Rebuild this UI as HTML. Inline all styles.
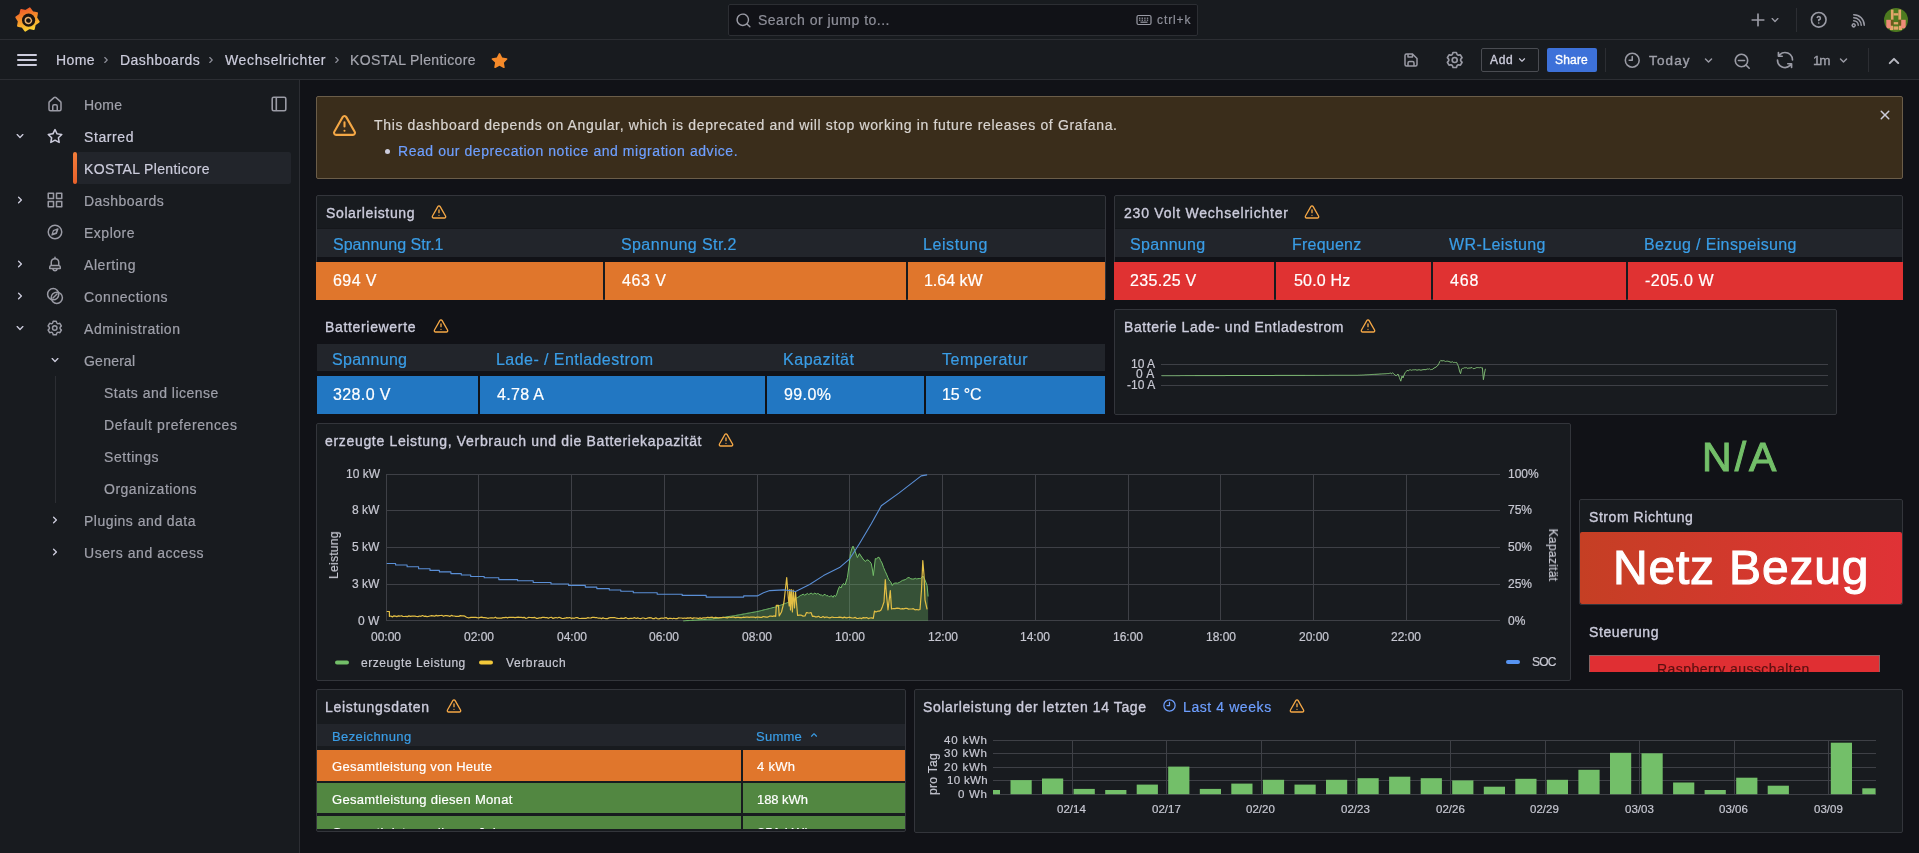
<!DOCTYPE html>
<html><head><meta charset="utf-8"><title>KOSTAL Plenticore - Grafana</title>
<style>
html,body{margin:0;padding:0;}
body{width:1919px;height:853px;overflow:hidden;position:relative;background:#111217;font-family:'Liberation Sans', sans-serif;}
svg{display:block;}
body>div{will-change:transform;-webkit-text-stroke:0.2px currentColor;}
</style></head><body>
<div style="position:absolute;left:0px;top:0px;width:1919px;height:39px;background:#181b1f;"></div>
<div style="position:absolute;left:0px;top:39px;width:1919px;height:1px;background:#2c2e33;"></div>
<div style="position:absolute;left:0px;top:40px;width:1919px;height:39px;background:#181b1f;"></div>
<div style="position:absolute;left:0px;top:79px;width:1919px;height:1px;background:#2c2e33;"></div>
<div style="position:absolute;left:0px;top:80px;width:299px;height:773px;background:#181b1f;"></div>
<div style="position:absolute;left:299px;top:80px;width:1px;height:773px;background:#2c2e33;"></div>
<div style="position:absolute;left:728px;top:4px;width:470px;height:32px;background:#111217;box-sizing:border-box;border:1px solid #2c2e33;border-radius:2px;"></div>
<div style="position:absolute;left:757.50px;top:13.00px;font-size:14px;line-height:14px;font-weight:400;color:#8e8f99;white-space:nowrap;letter-spacing:0.491px;">Search or jump to...</div>
<div style="position:absolute;left:1156.60px;top:14.00px;font-size:12px;line-height:12px;font-weight:400;color:#8e8f99;white-space:nowrap;letter-spacing:0.897px;">ctrl+k</div>
<div style="position:absolute;left:55.50px;top:53.00px;font-size:14px;line-height:14px;font-weight:400;color:#ccccdc;white-space:nowrap;letter-spacing:0.380px;">Home</div>
<div style="position:absolute;left:119.50px;top:53.00px;font-size:14px;line-height:14px;font-weight:400;color:#ccccdc;white-space:nowrap;letter-spacing:0.478px;">Dashboards</div>
<div style="position:absolute;left:224.50px;top:53.00px;font-size:14px;line-height:14px;font-weight:400;color:#ccccdc;white-space:nowrap;letter-spacing:0.629px;">Wechselrichter</div>
<div style="position:absolute;left:350.00px;top:53.00px;font-size:14px;line-height:14px;font-weight:400;color:#a4a5ae;white-space:nowrap;letter-spacing:0.354px;">KOSTAL Plenticore</div>
<div style="position:absolute;left:1481px;top:48px;width:58px;height:24px;background:transparent;box-sizing:border-box;border:1px solid #4a4c52;border-radius:2px;"></div>
<div style="position:absolute;left:1489.50px;top:54.00px;font-size:12px;line-height:12px;font-weight:400;color:#ccccdc;white-space:nowrap;letter-spacing:0.670px;-webkit-text-stroke:0.35px currentColor;">Add</div>
<div style="position:absolute;left:1547px;top:48px;width:50px;height:24px;background:#3d71d9;border-radius:2px;"></div>
<div style="position:absolute;left:1555.30px;top:54.00px;font-size:12px;line-height:12px;font-weight:400;color:#ffffff;white-space:nowrap;letter-spacing:0.192px;-webkit-text-stroke:0.35px currentColor;">Share</div>
<div style="position:absolute;left:1605px;top:48px;width:1px;height:24px;background:#2c2e33;"></div>
<div style="position:absolute;left:1649.40px;top:54.00px;font-size:13.5px;line-height:13.5px;font-weight:400;color:#9fa0aa;white-space:nowrap;letter-spacing:1.142px;-webkit-text-stroke:0.35px currentColor;">Today</div>
<div style="position:absolute;left:1812.50px;top:54.00px;font-size:13.5px;line-height:13.5px;font-weight:400;color:#9fa0aa;white-space:nowrap;letter-spacing:-1.266px;-webkit-text-stroke:0.35px currentColor;">1m</div>
<div style="position:absolute;left:1868px;top:48px;width:1px;height:24px;background:#2c2e33;"></div>
<div style="position:absolute;left:1796px;top:8px;width:1px;height:24px;background:#2c2e33;"></div>
<div style="position:absolute;left:77px;top:152px;width:214px;height:32px;background:#22252b;border-radius:2px;"></div>
<div style="position:absolute;left:73px;top:152px;width:4px;height:32px;background:#f05a28;border-radius:2px;background:linear-gradient(180deg,#f27d3a,#e8612b);"></div>
<div style="position:absolute;left:83.50px;top:98.00px;font-size:14px;line-height:14px;font-weight:400;color:#9fa0aa;white-space:nowrap;letter-spacing:0.214px;">Home</div>
<div style="position:absolute;left:83.50px;top:130.00px;font-size:14px;line-height:14px;font-weight:400;color:#ccccdc;white-space:nowrap;letter-spacing:0.596px;">Starred</div>
<div style="position:absolute;left:83.50px;top:162.00px;font-size:14px;line-height:14px;font-weight:400;color:#ccccdc;white-space:nowrap;letter-spacing:0.354px;">KOSTAL Plenticore</div>
<div style="position:absolute;left:83.50px;top:194.00px;font-size:14px;line-height:14px;font-weight:400;color:#9fa0aa;white-space:nowrap;letter-spacing:0.478px;">Dashboards</div>
<div style="position:absolute;left:83.50px;top:226.00px;font-size:14px;line-height:14px;font-weight:400;color:#9fa0aa;white-space:nowrap;letter-spacing:0.505px;">Explore</div>
<div style="position:absolute;left:83.50px;top:258.00px;font-size:14px;line-height:14px;font-weight:400;color:#9fa0aa;white-space:nowrap;letter-spacing:0.576px;">Alerting</div>
<div style="position:absolute;left:83.50px;top:290.00px;font-size:14px;line-height:14px;font-weight:400;color:#9fa0aa;white-space:nowrap;letter-spacing:0.567px;">Connections</div>
<div style="position:absolute;left:83.50px;top:322.00px;font-size:14px;line-height:14px;font-weight:400;color:#9fa0aa;white-space:nowrap;letter-spacing:0.561px;">Administration</div>
<div style="position:absolute;left:83.50px;top:354.00px;font-size:14px;line-height:14px;font-weight:400;color:#9fa0aa;white-space:nowrap;letter-spacing:0.231px;">General</div>
<div style="position:absolute;left:103.50px;top:386.00px;font-size:14px;line-height:14px;font-weight:400;color:#9fa0aa;white-space:nowrap;letter-spacing:0.480px;">Stats and license</div>
<div style="position:absolute;left:103.50px;top:418.00px;font-size:14px;line-height:14px;font-weight:400;color:#9fa0aa;white-space:nowrap;letter-spacing:0.601px;">Default preferences</div>
<div style="position:absolute;left:103.50px;top:450.00px;font-size:14px;line-height:14px;font-weight:400;color:#9fa0aa;white-space:nowrap;letter-spacing:0.558px;">Settings</div>
<div style="position:absolute;left:103.50px;top:482.00px;font-size:14px;line-height:14px;font-weight:400;color:#9fa0aa;white-space:nowrap;letter-spacing:0.509px;">Organizations</div>
<div style="position:absolute;left:55px;top:376px;width:1px;height:127px;background:#2c2e33;"></div>
<div style="position:absolute;left:83.50px;top:514.00px;font-size:14px;line-height:14px;font-weight:400;color:#9fa0aa;white-space:nowrap;letter-spacing:0.479px;">Plugins and data</div>
<div style="position:absolute;left:83.50px;top:546.00px;font-size:14px;line-height:14px;font-weight:400;color:#9fa0aa;white-space:nowrap;letter-spacing:0.548px;">Users and access</div>
<div style="position:absolute;left:316px;top:96px;width:1587px;height:83px;background:#3a2d1b;box-sizing:border-box;border:1px solid #6b5d49;border-radius:2px;"></div>
<div style="position:absolute;left:373.80px;top:118.00px;font-size:14px;line-height:14px;font-weight:400;color:#d8d4d0;white-space:nowrap;letter-spacing:0.651px;">This dashboard depends on Angular, which is deprecated and will stop working in future releases of Grafana.</div>
<div style="position:absolute;left:385px;top:149px;width:5px;height:5px;border-radius:50%;background:#ccccdc"></div>
<div style="position:absolute;left:397.70px;top:144.00px;font-size:14px;line-height:14px;font-weight:400;color:#6e9fff;white-space:nowrap;letter-spacing:0.557px;">Read our deprecation notice and migration advice.</div>
<div style="position:absolute;left:316px;top:195px;width:790px;height:105px;background:#181b1f;box-sizing:border-box;border:1px solid #33353b;border-radius:2px;"></div>
<div style="position:absolute;left:317px;top:228px;width:788px;height:1px;background:#15171b;"></div>
<div style="position:absolute;left:317px;top:229px;width:788px;height:28px;background:#22252b;"></div>
<div style="position:absolute;left:317px;top:257px;width:788px;height:5px;background:#111217;"></div>
<div style="position:absolute;left:316px;top:262px;width:287px;height:38px;background:#e0762c;"></div>
<div style="position:absolute;left:605px;top:262px;width:301px;height:38px;background:#e0762c;"></div>
<div style="position:absolute;left:908px;top:262px;width:197px;height:38px;background:#e0762c;"></div>
<div style="position:absolute;left:325.50px;top:206.00px;font-size:14px;line-height:14px;font-weight:400;color:#ccccdc;white-space:nowrap;letter-spacing:0.630px;-webkit-text-stroke:0.35px currentColor;">Solarleistung</div>
<div style="position:absolute;left:332.50px;top:237.00px;font-size:16px;line-height:16px;font-weight:400;color:#3a9de6;white-space:nowrap;letter-spacing:0.014px;">Spannung Str.1</div>
<div style="position:absolute;left:621.00px;top:237.00px;font-size:16px;line-height:16px;font-weight:400;color:#3a9de6;white-space:nowrap;letter-spacing:0.399px;">Spannung Str.2</div>
<div style="position:absolute;left:923.00px;top:237.00px;font-size:16px;line-height:16px;font-weight:400;color:#3a9de6;white-space:nowrap;letter-spacing:0.571px;">Leistung</div>
<div style="position:absolute;left:332.50px;top:273.00px;font-size:16px;line-height:16px;font-weight:400;color:#ffffff;white-space:nowrap;letter-spacing:0.422px;">694 V</div>
<div style="position:absolute;left:622.00px;top:273.00px;font-size:16px;line-height:16px;font-weight:400;color:#ffffff;white-space:nowrap;letter-spacing:0.547px;">463 V</div>
<div style="position:absolute;left:924.00px;top:273.00px;font-size:16px;line-height:16px;font-weight:400;color:#ffffff;white-space:nowrap;letter-spacing:-0.031px;">1.64 kW</div>
<div style="position:absolute;left:1114px;top:195px;width:789px;height:105px;background:#181b1f;box-sizing:border-box;border:1px solid #33353b;border-radius:2px;"></div>
<div style="position:absolute;left:1115px;top:228px;width:787px;height:1px;background:#15171b;"></div>
<div style="position:absolute;left:1115px;top:229px;width:787px;height:28px;background:#22252b;"></div>
<div style="position:absolute;left:1115px;top:257px;width:787px;height:5px;background:#111217;"></div>
<div style="position:absolute;left:1114px;top:262px;width:160px;height:38px;background:#e03232;"></div>
<div style="position:absolute;left:1276px;top:262px;width:155px;height:38px;background:#e03232;"></div>
<div style="position:absolute;left:1433px;top:262px;width:193px;height:38px;background:#e03232;"></div>
<div style="position:absolute;left:1628px;top:262px;width:275px;height:38px;background:#e03232;"></div>
<div style="position:absolute;left:1123.50px;top:206.00px;font-size:14px;line-height:14px;font-weight:400;color:#ccccdc;white-space:nowrap;letter-spacing:0.781px;-webkit-text-stroke:0.35px currentColor;">230 Volt Wechselrichter</div>
<div style="position:absolute;left:1130.20px;top:237.00px;font-size:16px;line-height:16px;font-weight:400;color:#3a9de6;white-space:nowrap;letter-spacing:0.319px;">Spannung</div>
<div style="position:absolute;left:1292.30px;top:237.00px;font-size:16px;line-height:16px;font-weight:400;color:#3a9de6;white-space:nowrap;letter-spacing:0.229px;">Frequenz</div>
<div style="position:absolute;left:1448.70px;top:237.00px;font-size:16px;line-height:16px;font-weight:400;color:#3a9de6;white-space:nowrap;letter-spacing:0.402px;">WR-Leistung</div>
<div style="position:absolute;left:1644.00px;top:237.00px;font-size:16px;line-height:16px;font-weight:400;color:#3a9de6;white-space:nowrap;letter-spacing:0.368px;">Bezug / Einspeisung</div>
<div style="position:absolute;left:1130.20px;top:273.00px;font-size:16px;line-height:16px;font-weight:400;color:#ffffff;white-space:nowrap;letter-spacing:0.320px;">235.25 V</div>
<div style="position:absolute;left:1293.80px;top:273.00px;font-size:16px;line-height:16px;font-weight:400;color:#ffffff;white-space:nowrap;letter-spacing:0.177px;">50.0 Hz</div>
<div style="position:absolute;left:1450.00px;top:273.00px;font-size:16px;line-height:16px;font-weight:400;color:#ffffff;white-space:nowrap;letter-spacing:0.898px;">468</div>
<div style="position:absolute;left:1645.00px;top:273.00px;font-size:16px;line-height:16px;font-weight:400;color:#ffffff;white-space:nowrap;letter-spacing:0.511px;">-205.0 W</div>
<div style="position:absolute;left:317px;top:344px;width:788px;height:27px;background:#22252b;"></div>
<div style="position:absolute;left:317px;top:376px;width:161px;height:38px;background:#2277c2;"></div>
<div style="position:absolute;left:480px;top:376px;width:285px;height:38px;background:#2277c2;"></div>
<div style="position:absolute;left:767px;top:376px;width:157px;height:38px;background:#2277c2;"></div>
<div style="position:absolute;left:926px;top:376px;width:179px;height:38px;background:#2277c2;"></div>
<div style="position:absolute;left:325.40px;top:320.00px;font-size:14px;line-height:14px;font-weight:400;color:#ccccdc;white-space:nowrap;letter-spacing:0.668px;-webkit-text-stroke:0.35px currentColor;">Batteriewerte</div>
<div style="position:absolute;left:332.30px;top:352.00px;font-size:16px;line-height:16px;font-weight:400;color:#3a9de6;white-space:nowrap;letter-spacing:0.290px;">Spannung</div>
<div style="position:absolute;left:496.00px;top:352.00px;font-size:16px;line-height:16px;font-weight:400;color:#3a9de6;white-space:nowrap;letter-spacing:0.446px;">Lade- / Entladestrom</div>
<div style="position:absolute;left:783.00px;top:352.00px;font-size:16px;line-height:16px;font-weight:400;color:#3a9de6;white-space:nowrap;letter-spacing:0.535px;">Kapazität</div>
<div style="position:absolute;left:942.00px;top:352.00px;font-size:16px;line-height:16px;font-weight:400;color:#3a9de6;white-space:nowrap;letter-spacing:0.509px;">Temperatur</div>
<div style="position:absolute;left:332.80px;top:387.00px;font-size:16px;line-height:16px;font-weight:400;color:#ffffff;white-space:nowrap;letter-spacing:0.391px;">328.0 V</div>
<div style="position:absolute;left:497.00px;top:387.00px;font-size:16px;line-height:16px;font-weight:400;color:#ffffff;white-space:nowrap;letter-spacing:0.325px;">4.78 A</div>
<div style="position:absolute;left:784.00px;top:387.00px;font-size:16px;line-height:16px;font-weight:400;color:#ffffff;white-space:nowrap;letter-spacing:0.406px;">99.0%</div>
<div style="position:absolute;left:942.00px;top:387.00px;font-size:16px;line-height:16px;font-weight:400;color:#ffffff;white-space:nowrap;letter-spacing:-0.176px;">15 °C</div>
<div style="position:absolute;left:1114px;top:309px;width:723px;height:106px;background:#181b1f;box-sizing:border-box;border:1px solid #33353b;border-radius:2px;"></div>
<div style="position:absolute;left:1123.50px;top:320.00px;font-size:14px;line-height:14px;font-weight:400;color:#ccccdc;white-space:nowrap;letter-spacing:0.597px;-webkit-text-stroke:0.35px currentColor;">Batterie Lade- und Entladestrom</div>
<div style="position:absolute;left:316px;top:423px;width:1255px;height:258px;background:#181b1f;box-sizing:border-box;border:1px solid #33353b;border-radius:2px;"></div>
<div style="position:absolute;left:325.00px;top:434.00px;font-size:14px;line-height:14px;font-weight:400;color:#ccccdc;white-space:nowrap;letter-spacing:0.672px;-webkit-text-stroke:0.35px currentColor;">erzeugte Leistung, Verbrauch und die Batteriekapazität</div>
<div style="position:absolute;left:1702.00px;top:437.00px;font-size:41px;line-height:41px;font-weight:400;color:#73bf69;white-space:nowrap;letter-spacing:3.020px;-webkit-text-stroke:1px #73bf69;">N/A</div>
<div style="position:absolute;left:1579px;top:499px;width:324px;height:106px;background:#181b1f;box-sizing:border-box;border:1px solid #33353b;border-radius:2px;"></div>
<div style="position:absolute;left:1580px;top:532px;width:322px;height:72px;background:linear-gradient(90deg,#c53f24 0%,#e03236 100%);border-radius:2px;"></div>
<div style="position:absolute;left:1588.50px;top:510.00px;font-size:14px;line-height:14px;font-weight:400;color:#ccccdc;white-space:nowrap;letter-spacing:0.563px;-webkit-text-stroke:0.35px currentColor;">Strom Richtung</div>
<div style="position:absolute;left:1613.20px;top:544.00px;font-size:48px;line-height:48px;font-weight:400;color:#ffffff;white-space:nowrap;letter-spacing:0.807px;-webkit-text-stroke:1.1px #ffffff;">Netz Bezug</div>
<div style="position:absolute;left:1588.50px;top:625.00px;font-size:14px;line-height:14px;font-weight:400;color:#ccccdc;white-space:nowrap;letter-spacing:0.611px;-webkit-text-stroke:0.35px currentColor;">Steuerung</div>
<div style="position:absolute;left:1589px;top:655px;width:291px;height:17px;overflow:hidden;background:#e02f33;box-sizing:border-box;border:1px solid #8a6464;border-bottom:none;"><div style="position:absolute;left:67px;top:6px;font-size:14px;line-height:14px;color:#5a1010;white-space:nowrap;letter-spacing:0.45px">Raspberry ausschalten</div></div>
<div style="position:absolute;left:316px;top:689px;width:590px;height:143px;background:#181b1f;box-sizing:border-box;border:1px solid #33353b;border-radius:2px;"></div>
<div style="position:absolute;left:317px;top:724px;width:588px;height:22px;background:#22252b;"></div>
<div style="position:absolute;left:317px;top:750px;width:424px;height:31px;background:#e0762c;"></div>
<div style="position:absolute;left:743px;top:750px;width:162px;height:31px;background:#e0762c;"></div>
<div style="position:absolute;left:317px;top:783px;width:424px;height:30px;background:#528741;"></div>
<div style="position:absolute;left:743px;top:783px;width:162px;height:30px;background:#528741;"></div>
<div style="position:absolute;left:317px;top:816px;width:424px;height:13px;background:#528741;"></div>
<div style="position:absolute;left:743px;top:816px;width:162px;height:13px;background:#528741;"></div>
<div style="position:absolute;left:325.20px;top:700.00px;font-size:14px;line-height:14px;font-weight:400;color:#ccccdc;white-space:nowrap;letter-spacing:0.695px;-webkit-text-stroke:0.35px currentColor;">Leistungsdaten</div>
<div style="position:absolute;left:332.30px;top:730.00px;font-size:13px;line-height:13px;font-weight:400;color:#3a9de6;white-space:nowrap;letter-spacing:0.403px;">Bezeichnung</div>
<div style="position:absolute;left:755.60px;top:730.00px;font-size:13px;line-height:13px;font-weight:400;color:#3a9de6;white-space:nowrap;letter-spacing:0.251px;">Summe</div>
<div style="position:absolute;left:332.30px;top:760.00px;font-size:13px;line-height:13px;font-weight:400;color:#ffffff;white-space:nowrap;letter-spacing:0.296px;">Gesamtleistung von Heute</div>
<div style="position:absolute;left:757.20px;top:760.00px;font-size:13px;line-height:13px;font-weight:400;color:#ffffff;white-space:nowrap;letter-spacing:0.289px;">4 kWh</div>
<div style="position:absolute;left:332.30px;top:793.00px;font-size:13px;line-height:13px;font-weight:400;color:#ffffff;white-space:nowrap;letter-spacing:0.320px;">Gesamtleistung diesen Monat</div>
<div style="position:absolute;left:757.20px;top:793.00px;font-size:13px;line-height:13px;font-weight:400;color:#ffffff;white-space:nowrap;letter-spacing:-0.052px;">188 kWh</div>
<div style="position:absolute;left:317px;top:816px;width:588px;height:13px;overflow:hidden;"><div style="position:absolute;left:15px;top:10px;font-size:13px;line-height:13px;color:#fff;white-space:nowrap;letter-spacing:0.5px">Gesamtleistung dieses Jahr</div><div style="position:absolute;left:440.5px;top:10px;font-size:13px;line-height:13px;color:#fff;white-space:nowrap;letter-spacing:0.5px">851 kWh</div></div>
<div style="position:absolute;left:914px;top:689px;width:989px;height:144px;background:#181b1f;box-sizing:border-box;border:1px solid #33353b;border-radius:2px;"></div>
<div style="position:absolute;left:922.80px;top:700.00px;font-size:14px;line-height:14px;font-weight:400;color:#ccccdc;white-space:nowrap;letter-spacing:0.604px;-webkit-text-stroke:0.35px currentColor;">Solarleistung der letzten 14 Tage</div>
<div style="position:absolute;left:1182.50px;top:700.00px;font-size:14px;line-height:14px;font-weight:400;color:#6e9fff;white-space:nowrap;letter-spacing:0.589px;">Last 4 weeks</div>
<svg style="position:absolute;left:0;top:0" width="1919" height="853" viewBox="0 0 1919 853"><line x1="386" y1="474.5" x2="1500" y2="474.5" stroke="#3e4046" stroke-width="1"/><line x1="386" y1="510.5" x2="1500" y2="510.5" stroke="#3e4046" stroke-width="1"/><line x1="386" y1="547.5" x2="1500" y2="547.5" stroke="#3e4046" stroke-width="1"/><line x1="386" y1="584.5" x2="1500" y2="584.5" stroke="#3e4046" stroke-width="1"/><line x1="386" y1="620.5" x2="1500" y2="620.5" stroke="#3e4046" stroke-width="1"/><line x1="386.5" y1="474" x2="386.5" y2="621" stroke="#3e4046" stroke-width="1"/><line x1="478.5" y1="474" x2="478.5" y2="621" stroke="#3e4046" stroke-width="1"/><line x1="571.5" y1="474" x2="571.5" y2="621" stroke="#3e4046" stroke-width="1"/><line x1="664.5" y1="474" x2="664.5" y2="621" stroke="#3e4046" stroke-width="1"/><line x1="757.5" y1="474" x2="757.5" y2="621" stroke="#3e4046" stroke-width="1"/><line x1="849.5" y1="474" x2="849.5" y2="621" stroke="#3e4046" stroke-width="1"/><line x1="942.5" y1="474" x2="942.5" y2="621" stroke="#3e4046" stroke-width="1"/><line x1="1035.5" y1="474" x2="1035.5" y2="621" stroke="#3e4046" stroke-width="1"/><line x1="1128.5" y1="474" x2="1128.5" y2="621" stroke="#3e4046" stroke-width="1"/><line x1="1220.5" y1="474" x2="1220.5" y2="621" stroke="#3e4046" stroke-width="1"/><line x1="1313.5" y1="474" x2="1313.5" y2="621" stroke="#3e4046" stroke-width="1"/><line x1="1406.5" y1="474" x2="1406.5" y2="621" stroke="#3e4046" stroke-width="1"/><polygon points="683.3,620.9 684.5,620.8 685.7,620.7 686.9,620.6 688.1,620.6 689.3,620.5 690.5,620.4 691.8,620.3 693.0,620.2 694.2,620.1 695.4,620.1 696.6,620.0 697.8,619.9 699.0,619.8 700.2,619.7 701.4,619.6 702.6,619.6 703.8,619.5 705.0,619.4 706.3,619.3 707.5,619.2 708.7,619.1 709.9,619.1 711.1,619.0 712.3,618.9 713.5,618.8 714.7,618.6 716.0,618.4 717.2,618.3 718.4,618.1 719.6,617.9 720.9,617.7 722.1,617.5 723.3,617.3 724.6,617.2 725.8,617.0 727.0,616.8 728.3,616.6 729.5,616.4 730.7,616.2 731.9,616.1 733.2,615.9 734.4,615.7 735.6,615.5 736.9,615.2 738.1,615.0 739.3,614.8 740.6,614.6 741.8,614.3 743.0,614.1 744.3,613.9 745.5,613.7 746.7,613.4 747.9,613.2 749.2,613.0 750.4,612.8 751.6,612.5 752.9,612.3 754.1,612.1 755.3,611.9 756.6,611.6 757.8,611.4 759.1,611.1 760.4,610.8 761.6,610.5 762.9,610.1 764.2,609.8 765.5,609.5 766.8,609.2 768.0,608.9 769.3,608.6 770.6,608.3 771.9,607.9 773.1,607.6 774.4,607.3 775.7,607.0 776.9,606.5 778.1,606.1 779.3,605.6 780.5,605.2 781.7,604.8 782.9,604.3 784.1,603.9 785.3,603.4 786.5,603.0 787.7,602.5 788.9,601.9 790.2,601.2 791.4,600.6 792.7,600.0 793.9,599.4 795.1,598.8 796.4,598.1 797.6,597.5 798.9,596.7 800.3,595.5 801.6,595.1 803.1,594.1 804.5,595.1 806.0,594.5 807.3,593.4 808.5,594.4 809.8,593.9 811.1,593.0 812.3,594.0 813.6,593.9 814.9,593.0 816.2,594.2 817.4,593.5 818.7,593.8 820.0,595.0 821.3,594.9 822.7,596.0 824.0,594.4 825.3,594.7 826.7,595.8 828.0,595.6 829.2,596.8 830.5,596.1 831.8,595.8 833.0,597.3 834.2,595.3 835.5,596.5 836.8,594.1 838.0,590.0 839.5,586.5 841.0,588.0 842.2,585.2 843.5,583.5 845.0,585.0 847.4,577.6 849.0,566.0 850.4,553.6 851.7,549.0 853.0,546.1 855.0,551.0 857.4,557.6 859.4,553.6 861.0,556.0 863.0,559.0 865.4,561.6 866.7,559.9 868.0,560.0 869.6,561.3 871.3,563.6 872.5,570.0 873.3,575.6 874.5,566.0 875.3,558.6 876.6,559.0 878.0,557.2 879.3,557.6 880.6,560.5 882.0,563.0 883.6,567.6 885.3,571.6 886.5,574.1 887.8,577.3 889.0,580.0 890.6,581.7 892.3,585.5 893.5,583.6 894.8,583.1 896.0,583.0 897.6,583.2 899.2,582.5 900.8,581.5 902.4,580.4 904.0,580.0 905.3,579.6 906.6,578.7 907.9,577.7 909.2,577.6 910.8,578.8 912.4,579.0 914.0,579.0 915.3,578.3 916.6,578.9 917.9,578.7 919.2,578.5 920.5,578.6 921.7,577.4 923.0,576.0 925.0,580.0 927.1,585.5 928.1,596.5 928.1,620.9" fill="#73bf69" fill-opacity="0.33" stroke="none"/><polyline points="683.3,620.9 684.5,620.8 685.7,620.7 686.9,620.6 688.1,620.6 689.3,620.5 690.5,620.4 691.8,620.3 693.0,620.2 694.2,620.1 695.4,620.1 696.6,620.0 697.8,619.9 699.0,619.8 700.2,619.7 701.4,619.6 702.6,619.6 703.8,619.5 705.0,619.4 706.3,619.3 707.5,619.2 708.7,619.1 709.9,619.1 711.1,619.0 712.3,618.9 713.5,618.8 714.7,618.6 716.0,618.4 717.2,618.3 718.4,618.1 719.6,617.9 720.9,617.7 722.1,617.5 723.3,617.3 724.6,617.2 725.8,617.0 727.0,616.8 728.3,616.6 729.5,616.4 730.7,616.2 731.9,616.1 733.2,615.9 734.4,615.7 735.6,615.5 736.9,615.2 738.1,615.0 739.3,614.8 740.6,614.6 741.8,614.3 743.0,614.1 744.3,613.9 745.5,613.7 746.7,613.4 747.9,613.2 749.2,613.0 750.4,612.8 751.6,612.5 752.9,612.3 754.1,612.1 755.3,611.9 756.6,611.6 757.8,611.4 759.1,611.1 760.4,610.8 761.6,610.5 762.9,610.1 764.2,609.8 765.5,609.5 766.8,609.2 768.0,608.9 769.3,608.6 770.6,608.3 771.9,607.9 773.1,607.6 774.4,607.3 775.7,607.0 776.9,606.5 778.1,606.1 779.3,605.6 780.5,605.2 781.7,604.8 782.9,604.3 784.1,603.9 785.3,603.4 786.5,603.0 787.7,602.5 788.9,601.9 790.2,601.2 791.4,600.6 792.7,600.0 793.9,599.4 795.1,598.8 796.4,598.1 797.6,597.5 798.9,596.7 800.3,595.5 801.6,595.1 803.1,594.1 804.5,595.1 806.0,594.5 807.3,593.4 808.5,594.4 809.8,593.9 811.1,593.0 812.3,594.0 813.6,593.9 814.9,593.0 816.2,594.2 817.4,593.5 818.7,593.8 820.0,595.0 821.3,594.9 822.7,596.0 824.0,594.4 825.3,594.7 826.7,595.8 828.0,595.6 829.2,596.8 830.5,596.1 831.8,595.8 833.0,597.3 834.2,595.3 835.5,596.5 836.8,594.1 838.0,590.0 839.5,586.5 841.0,588.0 842.2,585.2 843.5,583.5 845.0,585.0 847.4,577.6 849.0,566.0 850.4,553.6 851.7,549.0 853.0,546.1 855.0,551.0 857.4,557.6 859.4,553.6 861.0,556.0 863.0,559.0 865.4,561.6 866.7,559.9 868.0,560.0 869.6,561.3 871.3,563.6 872.5,570.0 873.3,575.6 874.5,566.0 875.3,558.6 876.6,559.0 878.0,557.2 879.3,557.6 880.6,560.5 882.0,563.0 883.6,567.6 885.3,571.6 886.5,574.1 887.8,577.3 889.0,580.0 890.6,581.7 892.3,585.5 893.5,583.6 894.8,583.1 896.0,583.0 897.6,583.2 899.2,582.5 900.8,581.5 902.4,580.4 904.0,580.0 905.3,579.6 906.6,578.7 907.9,577.7 909.2,577.6 910.8,578.8 912.4,579.0 914.0,579.0 915.3,578.3 916.6,578.9 917.9,578.7 919.2,578.5 920.5,578.6 921.7,577.4 923.0,576.0 925.0,580.0 927.1,585.5 928.1,596.5" fill="none" stroke="#73bf69" stroke-width="1" stroke-linejoin="round"/><polyline points="386.7,611.5 389.4,611.5 389.4,616.3 390.9,616.0 392.4,616.9 393.9,615.8 395.4,616.2 396.9,616.6 398.4,615.8 399.9,616.2 401.4,615.7 402.9,616.4 404.4,616.5 405.9,616.3 407.4,616.6 408.9,615.9 410.5,616.4 412.0,616.2 413.5,616.2 415.0,616.1 416.5,616.5 418.0,616.6 419.5,616.0 421.0,616.3 422.5,615.5 424.0,616.3 425.5,616.2 427.0,616.6 428.5,616.4 430.0,616.0 431.5,615.7 433.0,615.9 434.6,616.2 436.1,615.4 437.6,615.9 439.1,615.6 440.6,615.5 442.1,615.4 443.7,616.3 445.2,615.5 446.7,615.6 448.2,615.8 449.7,616.4 451.3,615.4 452.8,615.9 454.3,616.0 455.8,616.4 457.3,616.3 458.8,616.4 460.4,615.6 461.9,615.8 463.4,615.9 464.9,616.2 466.5,617.3 468.1,617.8 469.6,617.7 471.1,617.3 472.6,617.3 474.1,617.4 475.7,617.4 477.2,617.7 478.7,617.8 480.2,617.4 481.7,617.1 483.2,617.6 484.8,617.6 486.3,617.8 487.8,618.3 489.3,618.0 490.8,617.8 492.3,617.9 493.9,618.0 495.4,617.2 496.9,618.2 498.4,618.1 499.9,618.2 501.4,618.1 503.0,617.6 504.5,617.7 506.0,617.3 507.5,617.9 509.0,617.3 510.5,617.3 512.1,617.4 513.6,617.4 515.1,617.6 516.6,617.3 518.1,617.2 519.6,617.4 521.2,617.3 522.7,617.7 524.2,617.3 525.7,618.3 527.2,618.0 528.7,617.4 530.3,617.5 531.8,617.7 533.3,617.7 534.8,617.4 536.3,618.3 537.8,618.4 539.3,617.8 540.9,617.8 542.4,617.4 543.9,617.4 545.4,617.7 546.9,617.6 548.4,618.3 550.0,617.5 551.5,617.3 553.0,618.4 554.5,617.9 556.0,617.5 557.5,618.0 559.1,617.3 560.6,617.9 562.1,618.5 563.6,618.4 565.1,618.2 566.6,617.6 568.2,617.8 569.7,617.5 571.2,618.3 572.7,618.0 574.2,618.3 575.7,617.7 577.3,617.6 578.8,618.3 580.3,618.5 581.8,618.4 583.3,618.3 584.8,618.3 586.4,618.3 587.9,617.6 589.4,618.0 590.9,617.8 592.4,617.4 593.9,617.4 595.5,617.7 597.0,617.7 598.5,618.2 600.0,618.0 601.5,618.6 603.0,617.9 604.5,618.5 606.0,618.6 607.5,618.6 609.1,617.9 610.6,617.7 612.1,617.7 613.6,617.7 615.1,617.7 616.6,618.2 618.1,618.5 619.6,618.5 621.1,618.1 622.6,618.3 624.1,618.4 625.7,617.6 627.2,618.3 628.7,618.6 630.2,618.4 631.7,618.4 633.2,618.1 634.7,617.7 636.2,618.5 637.7,617.9 639.2,618.5 640.7,618.7 642.3,618.0 643.8,618.0 645.3,618.7 646.8,618.4 648.3,617.8 649.8,617.7 651.3,617.8 652.8,618.7 654.3,618.6 655.8,617.8 657.3,618.6 658.9,618.8 660.4,618.4 661.9,618.0 663.4,618.3 664.9,617.8 666.4,617.7 667.9,618.8 669.4,618.4 670.9,618.3 672.4,618.8 673.9,618.2 675.5,618.7 677.0,618.7 678.5,617.9 680.0,618.0 681.5,618.0 683.0,618.3 684.5,618.0 686.1,618.3 687.6,617.9 689.2,618.1 690.7,617.7 692.2,618.6 693.8,617.9 695.3,618.0 696.9,618.1 698.4,618.5 700.0,617.9 701.5,618.5 703.0,617.9 704.6,617.9 706.1,617.9 707.7,617.3 709.2,617.7 710.8,617.4 712.3,617.2 713.8,618.1 715.4,617.3 716.9,617.6 718.5,617.9 720.0,617.6 721.5,617.6 723.1,617.3 724.6,617.5 726.2,617.6 727.7,617.8 729.2,617.0 730.8,617.5 732.3,617.1 733.9,617.1 735.4,617.7 737.0,617.3 738.5,617.4 740.0,617.6 741.6,617.7 743.1,617.2 744.7,617.3 746.2,617.2 747.8,617.2 749.3,617.4 750.8,617.0 752.4,617.1 753.9,617.0 755.5,617.6 757.0,617.0 758.6,617.2 760.1,617.4 761.7,617.4 763.2,616.5 764.8,616.8 766.4,617.2 767.9,617.1 769.5,616.2 771.0,616.1 772.6,616.4 774.1,615.9 775.7,616.4 776.3,605.4 778.5,605.4 779.2,616.0 781.5,612.0 784.0,602.0 786.7,577.6 788.3,598.0 789.2,606.0 789.7,589.5 790.5,610.0 791.3,589.5 792.4,612.0 793.2,590.0 794.5,608.0 795.5,592.0 797.6,615.4 799.5,615.2 801.3,615.2 803.1,616.1 805.0,616.0 806.5,612.5 808.0,612.8 809.5,613.0 811.0,612.5 812.5,616.5 814.0,616.2 815.5,616.9 817.0,616.9 818.5,616.3 820.0,617.3 821.5,617.5 823.0,616.6 824.5,617.6 826.0,617.0 827.5,617.2 829.0,617.8 830.5,617.7 832.0,617.0 833.5,617.4 835.0,617.5 836.6,617.5 838.1,617.4 839.7,617.2 841.2,617.4 842.8,617.9 844.4,617.1 845.9,617.8 847.5,617.7 849.1,617.2 850.6,617.6 852.2,618.0 853.8,617.9 855.3,617.4 856.9,618.5 858.4,618.3 860.0,618.0 861.7,618.6 863.3,617.6 865.0,617.9 866.6,617.6 868.3,618.6 870.0,618.0 871.6,617.9 873.3,618.4 874.5,611.0 876.0,612.0 877.7,611.2 879.3,611.2 881.0,610.0 882.5,606.4 884.0,602.0 885.3,579.5 886.5,595.0 888.0,610.0 890.3,590.5 891.5,609.0 893.2,608.5 895.0,608.6 897.1,608.1 899.2,608.4 900.7,609.0 902.3,608.7 903.8,608.9 905.4,608.3 906.9,608.3 908.5,609.1 910.0,609.0 911.7,609.0 913.3,608.7 915.0,609.8 916.7,609.5 918.3,609.8 920.0,609.5 921.5,590.0 922.8,560.6 924.0,575.0 925.0,600.0 927.1,609.4" fill="none" stroke="#e3bf45" stroke-width="1.2" stroke-linejoin="round"/><polyline points="386.7,563.5 395.6,563.5 395.6,565.0 407.1,565.0 407.1,566.7 418.6,566.7 418.6,568.8 430.0,568.8 430.0,570.4 439.4,570.4 439.4,571.9 450.9,571.9 450.9,573.6 461.3,573.6 461.3,575.0 470.7,575.0 470.7,576.5 484.2,576.5 484.2,577.7 498.8,577.7 498.8,579.6 517.6,579.6 517.6,580.8 533.2,580.8 533.2,582.5 551.0,582.5 551.0,584.0 568.6,584.0 568.6,585.4 585.3,585.4 585.3,587.1 596.8,587.1 596.8,588.6 609.3,588.6 609.3,590.0 620.8,590.0 620.8,591.3 633.3,591.3 633.3,592.7 657.2,592.7 657.2,594.2 682.2,594.2 682.2,595.4 706.2,595.4 706.2,597.1 742.7,597.1 742.7,597.1 743.7,597.1 743.7,595.9 757.3,595.9 757.3,595.9 763.5,592.7 769.8,590.6 783.7,589.9 789.0,590.5 795.6,591.5 809.6,584.5 823.5,575.6 839.5,567.6 849.4,559.2 859.4,543.7 871.3,523.8 881.3,505.8 899.2,492.9 921.2,475.9 927.1,474.9" fill="none" stroke="#5a8fd6" stroke-width="1.1" stroke-linejoin="round"/><rect x="335" y="660.5" width="14" height="4" rx="2" fill="#73bf69"/><rect x="479" y="660.5" width="14" height="4" rx="2" fill="#f2c93a"/><rect x="1506" y="660" width="14" height="4" rx="2" fill="#5794f2"/><line x1="1161" y1="364.5" x2="1828" y2="364.5" stroke="#3e4046" stroke-width="1"/><line x1="1161" y1="375.5" x2="1828" y2="375.5" stroke="#3e4046" stroke-width="1"/><line x1="1161" y1="385.5" x2="1828" y2="385.5" stroke="#3e4046" stroke-width="1"/><polyline points="1161.6,375.7 1162.6,375.7 1163.6,375.7 1164.6,375.7 1165.6,375.7 1166.7,375.7 1167.7,375.7 1168.7,375.7 1169.7,375.7 1170.7,375.7 1171.7,375.7 1172.7,375.7 1173.7,375.7 1174.7,375.7 1175.7,375.7 1176.8,375.7 1177.8,375.7 1178.8,375.7 1179.8,375.7 1180.8,375.6 1181.8,375.6 1182.8,375.6 1183.8,375.6 1184.8,375.6 1185.9,375.6 1186.9,375.6 1187.9,375.6 1188.9,375.6 1189.9,375.6 1190.9,375.6 1191.9,375.6 1192.9,375.6 1193.9,375.6 1194.9,375.6 1196.0,375.6 1197.0,375.6 1198.0,375.6 1199.0,375.6 1200.0,375.6 1201.0,375.6 1202.0,375.6 1203.0,375.6 1204.0,375.6 1205.0,375.6 1206.0,375.6 1207.0,375.6 1208.0,375.6 1209.0,375.6 1210.0,375.6 1211.0,375.6 1212.0,375.6 1213.0,375.6 1214.0,375.6 1215.0,375.6 1216.0,375.6 1217.0,375.6 1218.0,375.6 1219.0,375.6 1220.0,375.6 1221.0,375.6 1222.0,375.6 1223.0,375.6 1224.0,375.6 1225.0,375.6 1226.0,375.5 1227.0,375.5 1228.0,375.5 1229.0,375.5 1230.0,375.5 1231.0,375.5 1232.0,375.5 1233.0,375.5 1234.0,375.5 1235.0,375.5 1236.0,375.5 1237.0,375.5 1238.0,375.5 1239.0,375.5 1240.0,375.5 1241.0,375.5 1242.0,375.5 1243.0,375.5 1244.0,375.5 1245.0,375.5 1246.0,375.5 1247.0,375.5 1248.0,375.5 1249.0,375.5 1250.0,375.5 1251.0,375.5 1252.0,375.5 1253.0,375.5 1254.0,375.5 1255.0,375.5 1256.0,375.5 1257.0,375.5 1258.0,375.5 1259.0,375.5 1260.0,375.5 1261.0,375.5 1262.0,375.5 1263.0,375.5 1264.0,375.5 1265.0,375.5 1266.0,375.5 1267.0,375.5 1268.0,375.5 1269.0,375.5 1270.0,375.5 1271.0,375.5 1272.0,375.5 1273.0,375.5 1274.0,375.5 1275.0,375.4 1276.0,375.4 1277.0,375.4 1278.0,375.4 1279.0,375.4 1280.0,375.4 1281.0,375.4 1282.0,375.4 1283.0,375.4 1284.0,375.4 1285.0,375.4 1286.0,375.4 1287.0,375.4 1288.0,375.4 1289.0,375.4 1290.0,375.4 1291.0,375.4 1292.0,375.4 1293.0,375.4 1294.0,375.4 1295.0,375.4 1296.0,375.4 1297.0,375.4 1298.0,375.4 1299.0,375.4 1300.0,375.4 1301.0,375.4 1302.0,375.4 1303.0,375.4 1304.0,375.4 1305.1,375.4 1306.1,375.4 1307.1,375.4 1308.1,375.4 1309.1,375.4 1310.1,375.4 1311.1,375.4 1312.1,375.4 1313.1,375.4 1314.1,375.4 1315.2,375.4 1316.2,375.4 1317.2,375.4 1318.2,375.4 1319.2,375.4 1320.2,375.4 1321.2,375.4 1322.2,375.4 1323.2,375.4 1324.3,375.4 1325.3,375.4 1326.3,375.4 1327.3,375.4 1328.3,375.4 1329.3,375.3 1330.3,375.3 1331.3,375.3 1332.3,375.3 1333.3,375.3 1334.4,375.3 1335.4,375.3 1336.4,375.3 1337.4,375.3 1338.4,375.3 1339.4,375.3 1340.4,375.3 1341.4,375.3 1342.4,375.3 1343.5,375.3 1344.5,375.3 1345.5,375.3 1346.5,375.3 1347.5,375.3 1348.5,375.3 1349.5,375.3 1350.5,375.3 1351.5,375.3 1352.5,375.3 1353.6,375.3 1354.6,375.3 1355.6,375.3 1356.6,375.3 1357.6,375.3 1358.6,375.2 1359.6,375.2 1360.7,375.1 1361.7,375.1 1362.7,375.0 1363.7,375.0 1364.7,374.9 1365.8,374.8 1366.8,374.8 1367.8,374.7 1368.8,374.7 1369.8,374.6 1370.9,374.6 1371.9,374.5 1372.9,374.4 1373.9,374.4 1374.9,374.3 1376.0,374.3 1377.0,374.2 1378.0,374.2 1379.0,374.1 1380.0,374.0 1381.1,374.0 1382.1,373.9 1383.1,373.9 1384.1,373.8 1385.1,373.8 1386.2,373.7 1387.2,373.6 1388.2,373.6 1389.2,373.5 1390.2,372.9 1391.3,373.9 1392.3,372.8 1393.3,373.3 1394.8,375.0 1396.2,375.7 1398.0,374.0 1399.4,377.5 1400.8,381.2 1402.0,376.0 1403.0,378.0 1404.0,375.1 1405.1,372.7 1406.1,371.6 1407.1,370.3 1408.2,370.9 1409.3,370.0 1410.4,369.8 1411.5,370.3 1412.6,369.9 1413.7,369.8 1414.8,369.8 1415.9,369.7 1417.0,370.3 1418.0,369.8 1419.0,369.9 1420.0,369.8 1421.0,370.4 1422.0,369.7 1423.0,369.9 1424.0,369.4 1425.0,369.8 1426.1,369.5 1427.3,369.0 1428.4,369.2 1429.5,368.8 1430.6,369.7 1431.8,369.4 1432.9,369.2 1433.9,368.0 1435.0,367.7 1436.0,367.0 1437.4,366.0 1438.8,363.8 1439.8,361.5 1440.8,360.4 1442.0,361.0 1443.2,360.6 1444.3,360.9 1445.5,361.5 1446.7,361.2 1447.8,361.2 1448.9,361.5 1450.0,361.9 1451.1,362.4 1452.2,361.6 1453.3,362.5 1454.4,362.4 1455.5,362.5 1456.6,362.4 1457.6,364.5 1458.6,366.8 1459.5,371.0 1460.6,373.7 1461.5,369.0 1462.6,368.4 1463.7,368.2 1464.7,367.7 1465.8,367.8 1466.8,367.7 1467.9,368.6 1468.9,367.9 1470.0,368.2 1471.0,367.7 1472.1,367.6 1473.1,368.6 1474.1,368.6 1475.2,368.3 1476.2,367.7 1477.2,367.6 1478.3,367.6 1479.3,367.8 1480.3,367.4 1481.4,367.8 1482.4,367.8 1483.4,379.7 1484.4,373.9 1485.4,368.8" fill="none" stroke="#7db873" stroke-width="1" stroke-linejoin="round"/><line x1="993" y1="740.5" x2="1876" y2="740.5" stroke="#3e4046" stroke-width="1"/><line x1="993" y1="753.5" x2="1876" y2="753.5" stroke="#3e4046" stroke-width="1"/><line x1="993" y1="767.5" x2="1876" y2="767.5" stroke="#3e4046" stroke-width="1"/><line x1="993" y1="780.5" x2="1876" y2="780.5" stroke="#3e4046" stroke-width="1"/><line x1="993" y1="794.5" x2="1876" y2="794.5" stroke="#3e4046" stroke-width="1"/><line x1="1072.5" y1="740" x2="1072.5" y2="794" stroke="#3e4046" stroke-width="1"/><line x1="1166.5" y1="740" x2="1166.5" y2="794" stroke="#3e4046" stroke-width="1"/><line x1="1261.5" y1="740" x2="1261.5" y2="794" stroke="#3e4046" stroke-width="1"/><line x1="1355.5" y1="740" x2="1355.5" y2="794" stroke="#3e4046" stroke-width="1"/><line x1="1450.5" y1="740" x2="1450.5" y2="794" stroke="#3e4046" stroke-width="1"/><line x1="1545.5" y1="740" x2="1545.5" y2="794" stroke="#3e4046" stroke-width="1"/><line x1="1639.5" y1="740" x2="1639.5" y2="794" stroke="#3e4046" stroke-width="1"/><line x1="1734.5" y1="740" x2="1734.5" y2="794" stroke="#3e4046" stroke-width="1"/><line x1="1828.5" y1="740" x2="1828.5" y2="794" stroke="#3e4046" stroke-width="1"/><rect x="993.0" y="790" width="7" height="4.2" fill="#73bf69"/><rect x="1010.5" y="780.1" width="21.2" height="14.1" fill="#73bf69"/><rect x="1042.0" y="778.5" width="21.2" height="15.7" fill="#73bf69"/><rect x="1073.6" y="788.9" width="21.2" height="5.3" fill="#73bf69"/><rect x="1105.2" y="790" width="21.2" height="4.2" fill="#73bf69"/><rect x="1136.7" y="784.6" width="21.2" height="9.6" fill="#73bf69"/><rect x="1168.2" y="766.6" width="21.2" height="27.6" fill="#73bf69"/><rect x="1199.8" y="788.9" width="21.2" height="5.3" fill="#73bf69"/><rect x="1231.3" y="783.6" width="21.2" height="10.6" fill="#73bf69"/><rect x="1262.9" y="779.8" width="21.2" height="14.4" fill="#73bf69"/><rect x="1294.5" y="784.6" width="21.2" height="9.6" fill="#73bf69"/><rect x="1326.0" y="779.8" width="21.2" height="14.4" fill="#73bf69"/><rect x="1357.5" y="778.2" width="21.2" height="16.0" fill="#73bf69"/><rect x="1389.1" y="776.7" width="21.2" height="17.5" fill="#73bf69"/><rect x="1420.7" y="778.2" width="21.2" height="16.0" fill="#73bf69"/><rect x="1452.2" y="780.4" width="21.2" height="13.8" fill="#73bf69"/><rect x="1483.8" y="786.7" width="21.2" height="7.5" fill="#73bf69"/><rect x="1515.3" y="778.8" width="21.2" height="15.4" fill="#73bf69"/><rect x="1546.8" y="779.8" width="21.2" height="14.4" fill="#73bf69"/><rect x="1578.4" y="769.8" width="21.2" height="24.4" fill="#73bf69"/><rect x="1610.0" y="752.8" width="21.2" height="41.4" fill="#73bf69"/><rect x="1641.5" y="753.3" width="21.2" height="40.9" fill="#73bf69"/><rect x="1673.1" y="782.5" width="21.2" height="11.7" fill="#73bf69"/><rect x="1704.6" y="790" width="21.2" height="4.2" fill="#73bf69"/><rect x="1736.2" y="777.7" width="21.2" height="16.5" fill="#73bf69"/><rect x="1767.7" y="785.7" width="21.2" height="8.5" fill="#73bf69"/><rect x="1830.8" y="742.7" width="21.2" height="51.5" fill="#73bf69"/><rect x="1862.3" y="788.3" width="13.3" height="5.9" fill="#73bf69"/></svg>
<div style="position:absolute;left:345.68px;top:468.00px;font-size:12px;line-height:12px;font-weight:400;color:#c7c8d2;white-space:nowrap;letter-spacing:0.000px;">10 kW</div>
<div style="position:absolute;left:352.36px;top:504.00px;font-size:12px;line-height:12px;font-weight:400;color:#c7c8d2;white-space:nowrap;letter-spacing:0.000px;">8 kW</div>
<div style="position:absolute;left:352.36px;top:541.00px;font-size:12px;line-height:12px;font-weight:400;color:#c7c8d2;white-space:nowrap;letter-spacing:0.000px;">5 kW</div>
<div style="position:absolute;left:352.36px;top:578.00px;font-size:12px;line-height:12px;font-weight:400;color:#c7c8d2;white-space:nowrap;letter-spacing:0.000px;">3 kW</div>
<div style="position:absolute;left:358.36px;top:615.00px;font-size:12px;line-height:12px;font-weight:400;color:#c7c8d2;white-space:nowrap;letter-spacing:0.000px;">0 W</div>
<div style="position:absolute;left:1508.30px;top:468.00px;font-size:12px;line-height:12px;font-weight:400;color:#c7c8d2;white-space:nowrap;letter-spacing:0.000px;">100%</div>
<div style="position:absolute;left:1508.30px;top:504.00px;font-size:12px;line-height:12px;font-weight:400;color:#c7c8d2;white-space:nowrap;letter-spacing:0.000px;">75%</div>
<div style="position:absolute;left:1508.30px;top:541.00px;font-size:12px;line-height:12px;font-weight:400;color:#c7c8d2;white-space:nowrap;letter-spacing:0.000px;">50%</div>
<div style="position:absolute;left:1508.30px;top:578.00px;font-size:12px;line-height:12px;font-weight:400;color:#c7c8d2;white-space:nowrap;letter-spacing:0.000px;">25%</div>
<div style="position:absolute;left:1508.30px;top:615.00px;font-size:12px;line-height:12px;font-weight:400;color:#c7c8d2;white-space:nowrap;letter-spacing:0.000px;">0%</div>
<div style="position:absolute;left:371.18px;top:631.00px;font-size:12px;line-height:12px;font-weight:400;color:#c7c8d2;white-space:nowrap;letter-spacing:0.000px;">00:00</div>
<div style="position:absolute;left:463.93px;top:631.00px;font-size:12px;line-height:12px;font-weight:400;color:#c7c8d2;white-space:nowrap;letter-spacing:0.000px;">02:00</div>
<div style="position:absolute;left:556.68px;top:631.00px;font-size:12px;line-height:12px;font-weight:400;color:#c7c8d2;white-space:nowrap;letter-spacing:0.000px;">04:00</div>
<div style="position:absolute;left:649.43px;top:631.00px;font-size:12px;line-height:12px;font-weight:400;color:#c7c8d2;white-space:nowrap;letter-spacing:0.000px;">06:00</div>
<div style="position:absolute;left:742.18px;top:631.00px;font-size:12px;line-height:12px;font-weight:400;color:#c7c8d2;white-space:nowrap;letter-spacing:0.000px;">08:00</div>
<div style="position:absolute;left:834.93px;top:631.00px;font-size:12px;line-height:12px;font-weight:400;color:#c7c8d2;white-space:nowrap;letter-spacing:0.000px;">10:00</div>
<div style="position:absolute;left:927.68px;top:631.00px;font-size:12px;line-height:12px;font-weight:400;color:#c7c8d2;white-space:nowrap;letter-spacing:0.000px;">12:00</div>
<div style="position:absolute;left:1020.43px;top:631.00px;font-size:12px;line-height:12px;font-weight:400;color:#c7c8d2;white-space:nowrap;letter-spacing:0.000px;">14:00</div>
<div style="position:absolute;left:1113.18px;top:631.00px;font-size:12px;line-height:12px;font-weight:400;color:#c7c8d2;white-space:nowrap;letter-spacing:0.000px;">16:00</div>
<div style="position:absolute;left:1205.93px;top:631.00px;font-size:12px;line-height:12px;font-weight:400;color:#c7c8d2;white-space:nowrap;letter-spacing:0.000px;">18:00</div>
<div style="position:absolute;left:1298.68px;top:631.00px;font-size:12px;line-height:12px;font-weight:400;color:#c7c8d2;white-space:nowrap;letter-spacing:0.000px;">20:00</div>
<div style="position:absolute;left:1391.43px;top:631.00px;font-size:12px;line-height:12px;font-weight:400;color:#c7c8d2;white-space:nowrap;letter-spacing:0.000px;">22:00</div>
<div style="position:absolute;left:360.80px;top:657.00px;font-size:12px;line-height:12px;font-weight:400;color:#c7c8d2;white-space:nowrap;letter-spacing:0.556px;">erzeugte Leistung</div>
<div style="position:absolute;left:505.80px;top:657.00px;font-size:12px;line-height:12px;font-weight:400;color:#c7c8d2;white-space:nowrap;letter-spacing:0.612px;">Verbrauch</div>
<div style="position:absolute;left:1532.30px;top:656.00px;font-size:12px;line-height:12px;font-weight:400;color:#c7c8d2;white-space:nowrap;letter-spacing:-0.808px;">SOC</div>
<div style="position:absolute;left:333.5px;top:555px;width:0;height:0"><div style="position:absolute;transform:translate(-50%,-50%) rotate(-90deg);font-size:12px;line-height:12px;color:#c7c8d2;white-space:nowrap;letter-spacing:0.3px">Leistung</div></div>
<div style="position:absolute;left:1552.5px;top:555px;width:0;height:0"><div style="position:absolute;transform:translate(-50%,-50%) rotate(90deg);font-size:12px;line-height:12px;color:#c7c8d2;white-space:nowrap;letter-spacing:0.3px">Kapazität</div></div>
<div style="position:absolute;left:1130.70px;top:358.00px;font-size:12px;line-height:12px;font-weight:400;color:#c7c8d2;white-space:nowrap;letter-spacing:-0.010px;">10 A</div>
<div style="position:absolute;left:1136.40px;top:368.00px;font-size:12px;line-height:12px;font-weight:400;color:#c7c8d2;white-space:nowrap;letter-spacing:0.470px;">0 A</div>
<div style="position:absolute;left:1126.50px;top:379.00px;font-size:12px;line-height:12px;font-weight:400;color:#c7c8d2;white-space:nowrap;letter-spacing:0.042px;">-10 A</div>
<div style="position:absolute;left:944.30px;top:735.00px;font-size:11.5px;line-height:11.5px;font-weight:400;color:#c7c8d2;white-space:nowrap;letter-spacing:0.800px;">40 kWh</div>
<div style="position:absolute;left:944.30px;top:748.00px;font-size:11.5px;line-height:11.5px;font-weight:400;color:#c7c8d2;white-space:nowrap;letter-spacing:0.800px;">30 kWh</div>
<div style="position:absolute;left:944.30px;top:762.00px;font-size:11.5px;line-height:11.5px;font-weight:400;color:#c7c8d2;white-space:nowrap;letter-spacing:0.800px;">20 kWh</div>
<div style="position:absolute;left:946.60px;top:775.00px;font-size:11.5px;line-height:11.5px;font-weight:400;color:#c7c8d2;white-space:nowrap;letter-spacing:0.340px;">10 kWh</div>
<div style="position:absolute;left:958.30px;top:789.00px;font-size:11.5px;line-height:11.5px;font-weight:400;color:#c7c8d2;white-space:nowrap;letter-spacing:0.719px;">0 Wh</div>
<div style="position:absolute;left:1057.11px;top:804.00px;font-size:11.5px;line-height:11.5px;font-weight:400;color:#c7c8d2;white-space:nowrap;letter-spacing:0.000px;">02/14</div>
<div style="position:absolute;left:1151.71px;top:804.00px;font-size:11.5px;line-height:11.5px;font-weight:400;color:#c7c8d2;white-space:nowrap;letter-spacing:0.000px;">02/17</div>
<div style="position:absolute;left:1246.31px;top:804.00px;font-size:11.5px;line-height:11.5px;font-weight:400;color:#c7c8d2;white-space:nowrap;letter-spacing:0.000px;">02/20</div>
<div style="position:absolute;left:1340.91px;top:804.00px;font-size:11.5px;line-height:11.5px;font-weight:400;color:#c7c8d2;white-space:nowrap;letter-spacing:0.000px;">02/23</div>
<div style="position:absolute;left:1435.51px;top:804.00px;font-size:11.5px;line-height:11.5px;font-weight:400;color:#c7c8d2;white-space:nowrap;letter-spacing:0.000px;">02/26</div>
<div style="position:absolute;left:1530.11px;top:804.00px;font-size:11.5px;line-height:11.5px;font-weight:400;color:#c7c8d2;white-space:nowrap;letter-spacing:0.000px;">02/29</div>
<div style="position:absolute;left:1624.71px;top:804.00px;font-size:11.5px;line-height:11.5px;font-weight:400;color:#c7c8d2;white-space:nowrap;letter-spacing:0.000px;">03/03</div>
<div style="position:absolute;left:1719.31px;top:804.00px;font-size:11.5px;line-height:11.5px;font-weight:400;color:#c7c8d2;white-space:nowrap;letter-spacing:0.000px;">03/06</div>
<div style="position:absolute;left:1813.91px;top:804.00px;font-size:11.5px;line-height:11.5px;font-weight:400;color:#c7c8d2;white-space:nowrap;letter-spacing:0.000px;">03/09</div>
<div style="position:absolute;left:933px;top:774px;width:0;height:0"><div style="position:absolute;transform:translate(-50%,-50%) rotate(-90deg);font-size:12px;line-height:12px;color:#c7c8d2;white-space:nowrap;letter-spacing:0.3px">pro Tag</div></div>
<svg style="position:absolute;left:431px;top:204px" width="16" height="16" viewBox="0 0 24 24"><path d="M12,16a1,1,0,1,0,1,1A1,1,0,0,0,12,16Zm10.67,1.47-8.05-14a3,3,0,0,0-5.24,0l-8,14A3,3,0,0,0,3.94,22H20.06a3,3,0,0,0,2.61-4.53Zm-1.73,2a1,1,0,0,1-.88.51H3.94a1,1,0,0,1-.88-.51,1,1,0,0,1,0-1l8-14a1,1,0,0,1,1.78,0l8.05,14A1,1,0,0,1,20.94,19.49ZM12,8a1,1,0,0,0-1,1v4a1,1,0,0,0,2,0V9A1,1,0,0,0,12,8Z" fill="#f5a846"/></svg>
<svg style="position:absolute;left:432.5px;top:318px" width="16" height="16" viewBox="0 0 24 24"><path d="M12,16a1,1,0,1,0,1,1A1,1,0,0,0,12,16Zm10.67,1.47-8.05-14a3,3,0,0,0-5.24,0l-8,14A3,3,0,0,0,3.94,22H20.06a3,3,0,0,0,2.61-4.53Zm-1.73,2a1,1,0,0,1-.88.51H3.94a1,1,0,0,1-.88-.51,1,1,0,0,1,0-1l8-14a1,1,0,0,1,1.78,0l8.05,14A1,1,0,0,1,20.94,19.49ZM12,8a1,1,0,0,0-1,1v4a1,1,0,0,0,2,0V9A1,1,0,0,0,12,8Z" fill="#f5a846"/></svg>
<svg style="position:absolute;left:1304px;top:204px" width="16" height="16" viewBox="0 0 24 24"><path d="M12,16a1,1,0,1,0,1,1A1,1,0,0,0,12,16Zm10.67,1.47-8.05-14a3,3,0,0,0-5.24,0l-8,14A3,3,0,0,0,3.94,22H20.06a3,3,0,0,0,2.61-4.53Zm-1.73,2a1,1,0,0,1-.88.51H3.94a1,1,0,0,1-.88-.51,1,1,0,0,1,0-1l8-14a1,1,0,0,1,1.78,0l8.05,14A1,1,0,0,1,20.94,19.49ZM12,8a1,1,0,0,0-1,1v4a1,1,0,0,0,2,0V9A1,1,0,0,0,12,8Z" fill="#f5a846"/></svg>
<svg style="position:absolute;left:1359.5px;top:318px" width="16" height="16" viewBox="0 0 24 24"><path d="M12,16a1,1,0,1,0,1,1A1,1,0,0,0,12,16Zm10.67,1.47-8.05-14a3,3,0,0,0-5.24,0l-8,14A3,3,0,0,0,3.94,22H20.06a3,3,0,0,0,2.61-4.53Zm-1.73,2a1,1,0,0,1-.88.51H3.94a1,1,0,0,1-.88-.51,1,1,0,0,1,0-1l8-14a1,1,0,0,1,1.78,0l8.05,14A1,1,0,0,1,20.94,19.49ZM12,8a1,1,0,0,0-1,1v4a1,1,0,0,0,2,0V9A1,1,0,0,0,12,8Z" fill="#f5a846"/></svg>
<svg style="position:absolute;left:717.5px;top:432px" width="16" height="16" viewBox="0 0 24 24"><path d="M12,16a1,1,0,1,0,1,1A1,1,0,0,0,12,16Zm10.67,1.47-8.05-14a3,3,0,0,0-5.24,0l-8,14A3,3,0,0,0,3.94,22H20.06a3,3,0,0,0,2.61-4.53Zm-1.73,2a1,1,0,0,1-.88.51H3.94a1,1,0,0,1-.88-.51,1,1,0,0,1,0-1l8-14a1,1,0,0,1,1.78,0l8.05,14A1,1,0,0,1,20.94,19.49ZM12,8a1,1,0,0,0-1,1v4a1,1,0,0,0,2,0V9A1,1,0,0,0,12,8Z" fill="#f5a846"/></svg>
<svg style="position:absolute;left:445.5px;top:698px" width="16" height="16" viewBox="0 0 24 24"><path d="M12,16a1,1,0,1,0,1,1A1,1,0,0,0,12,16Zm10.67,1.47-8.05-14a3,3,0,0,0-5.24,0l-8,14A3,3,0,0,0,3.94,22H20.06a3,3,0,0,0,2.61-4.53Zm-1.73,2a1,1,0,0,1-.88.51H3.94a1,1,0,0,1-.88-.51,1,1,0,0,1,0-1l8-14a1,1,0,0,1,1.78,0l8.05,14A1,1,0,0,1,20.94,19.49ZM12,8a1,1,0,0,0-1,1v4a1,1,0,0,0,2,0V9A1,1,0,0,0,12,8Z" fill="#f5a846"/></svg>
<svg style="position:absolute;left:1288.5px;top:698px" width="16" height="16" viewBox="0 0 24 24"><path d="M12,16a1,1,0,1,0,1,1A1,1,0,0,0,12,16Zm10.67,1.47-8.05-14a3,3,0,0,0-5.24,0l-8,14A3,3,0,0,0,3.94,22H20.06a3,3,0,0,0,2.61-4.53Zm-1.73,2a1,1,0,0,1-.88.51H3.94a1,1,0,0,1-.88-.51,1,1,0,0,1,0-1l8-14a1,1,0,0,1,1.78,0l8.05,14A1,1,0,0,1,20.94,19.49ZM12,8a1,1,0,0,0-1,1v4a1,1,0,0,0,2,0V9A1,1,0,0,0,12,8Z" fill="#f5a846"/></svg>
<svg style="position:absolute;left:332px;top:113px" width="25" height="25" viewBox="0 0 24 24"><path d="M12,16a1,1,0,1,0,1,1A1,1,0,0,0,12,16Zm10.67,1.47-8.05-14a3,3,0,0,0-5.24,0l-8,14A3,3,0,0,0,3.94,22H20.06a3,3,0,0,0,2.61-4.53Zm-1.73,2a1,1,0,0,1-.88.51H3.94a1,1,0,0,1-.88-.51,1,1,0,0,1,0-1l8-14a1,1,0,0,1,1.78,0l8.05,14A1,1,0,0,1,20.94,19.49ZM12,8a1,1,0,0,0-1,1v4a1,1,0,0,0,2,0V9A1,1,0,0,0,12,8Z" fill="#f5a846"/></svg>
<svg style="position:absolute;left:1876px;top:106px" width="18" height="18" viewBox="0 0 24 24"><path d="M13.41,12l4.3-4.29a1,1,0,1,0-1.42-1.42L12,10.59,7.71,6.29A1,1,0,0,0,6.29,7.71L10.59,12l-4.3,4.29a1,1,0,0,0,0,1.42,1,1,0,0,0,1.42,0L12,13.41l4.29,4.3a1,1,0,0,0,1.42,0,1,1,0,0,0,0-1.42Z" fill="#ccccdc"/></svg>
<svg style="position:absolute;left:735px;top:12px" width="17" height="17" viewBox="0 0 24 24"><path d="M21.71,20.29,18,16.61A9,9,0,1,0,16.61,18l3.68,3.68a1,1,0,0,0,1.42,0A1,1,0,0,0,21.71,20.29ZM11,18a7,7,0,1,1,7-7A7,7,0,0,1,11,18Z" fill="#9a9ba5"/></svg>
<svg style="position:absolute;left:1136px;top:14px" width="16" height="12" viewBox="0 0 16 12"><rect x="1" y="1.5" width="14" height="9" rx="1.5" fill="none" stroke="#9a9ba5" stroke-width="1.2"/><g fill="#9a9ba5"><rect x="3" y="3.6" width="1.4" height="1.2"/><rect x="5.6" y="3.6" width="1.4" height="1.2"/><rect x="8.2" y="3.6" width="1.4" height="1.2"/><rect x="10.8" y="3.6" width="1.4" height="1.2"/><rect x="3" y="5.6" width="1.4" height="1.2"/><rect x="5.6" y="5.6" width="1.4" height="1.2"/><rect x="8.2" y="5.6" width="1.4" height="1.2"/><rect x="10.8" y="5.6" width="1.4" height="1.2"/><rect x="4.5" y="7.6" width="7" height="1.2"/></g></svg>
<svg style="position:absolute;left:1748px;top:10px" width="20" height="20" viewBox="0 0 24 24"><path d="M19,11H13V5a1,1,0,0,0-2,0v6H5a1,1,0,0,0,0,2h6v6a1,1,0,0,0,2,0V13h6a1,1,0,0,0,0-2Z" fill="#9a9ba5"/></svg>
<svg style="position:absolute;left:1767px;top:12px" width="16" height="16" viewBox="0 0 24 24"><path d="M17,9.17a1,1,0,0,0-1.41,0L12,12.71,8.46,9.17a1,1,0,0,0-1.41,0,1,1,0,0,0,0,1.42l4.24,4.24a1,1,0,0,0,1.42,0L17,10.59A1,1,0,0,0,17,9.17Z" fill="#9a9ba5"/></svg>
<svg style="position:absolute;left:1809px;top:10px" width="19.5" height="19.5" viewBox="0 0 24 24"><path d="M11.29,15.29a1.58,1.58,0,0,0-.12.15.76.76,0,0,0-.09.18.64.64,0,0,0-.06.18,1.36,1.36,0,0,0,0,.2.84.84,0,0,0,.08.38.9.9,0,0,0,.54.54.94.94,0,0,0,.76,0,.9.9,0,0,0,.54-.54A1,1,0,0,0,13,16a1,1,0,0,0-.29-.71A1,1,0,0,0,11.29,15.29ZM12,2A10,10,0,1,0,22,12,10,10,0,0,0,12,2Zm0,18a8,8,0,1,1,8-8A8,8,0,0,1,12,20ZM12,7A3,3,0,0,0,9.4,8.5a1,1,0,1,0,1.73,1A1,1,0,0,1,12,9a1,1,0,0,1,0,2,1,1,0,0,0-1,1v1a1,1,0,0,0,2,0v-.18A3,3,0,0,0,12,7Z" fill="#9a9ba5"/></svg>
<svg style="position:absolute;left:1850px;top:11px" width="18" height="18" viewBox="0 0 24 24"><path d="M2.88,16.88a3,3,0,1,0,4.24,4.24,3,3,0,0,0-4.24-4.24Zm2.83,2.83a1,1,0,0,1-1.42-1.42,1,1,0,0,1,1.42,0A1,1,0,0,1,5.71,19.71ZM5,12a1,1,0,0,0,0,2,5,5,0,0,1,5,5,1,1,0,0,0,2,0,7,7,0,0,0-7-7ZM5,8a1,1,0,0,0,0,2,9,9,0,0,1,9,9,1,1,0,0,0,2,0,11.08,11.08,0,0,0-3.22-7.78A11.08,11.08,0,0,0,5,8Zm10.61.39A15.11,15.11,0,0,0,5,4a1,1,0,0,0,0,2,13,13,0,0,1,13,13,1,1,0,0,0,2,0A15.11,15.11,0,0,0,15.61,8.39Z" fill="#9a9ba5"/></svg>
<svg style="position:absolute;left:1884px;top:8px" width="24" height="24" viewBox="0 0 24 24"><defs><clipPath id="av"><circle cx="12" cy="12" r="12"/></clipPath></defs><g clip-path="url(#av)"><rect width="24" height="24" fill="#4d7a1f"/><g fill="#e3a56a"><rect x="6.9" y="1.6" width="2.6" height="10.2"/><rect x="14.4" y="1.6" width="2.7" height="10.2"/><rect x="9.5" y="5.2" width="4.9" height="2.3"/><rect x="9.5" y="14.1" width="4.9" height="2.3"/><rect x="9.5" y="18.4" width="4.9" height="3.3"/><rect x="6.0" y="17.5" width="3.0" height="4.5"/><rect x="15" y="17.5" width="3.0" height="4.5"/></g><g fill="#ee8a78"><rect x="2.3" y="11.8" width="4.6" height="8.6"/><rect x="17.1" y="11.8" width="4.6" height="8.6"/></g><g fill="#6b5a1c"><rect x="6.9" y="11.8" width="2.6" height="5.7"/><rect x="14.4" y="11.8" width="2.7" height="5.7"/></g></g></svg>
<svg style="position:absolute;left:15px;top:7px" width="25" height="26" viewBox="0 0 25 26"><defs><linearGradient id="gl" x1="0.2" y1="0" x2="0.5" y2="1"><stop offset="0" stop-color="#f0552a"/><stop offset="0.55" stop-color="#f5962a"/><stop offset="1" stop-color="#fbd334"/></linearGradient></defs><path d="M14.80,1.13 L17.53,5.04 L22.17,6.09 L21.33,10.78 L23.87,14.80 L19.96,17.53 L18.91,22.17 L14.22,21.33 L10.20,23.87 L7.47,19.96 L2.83,18.91 L3.67,14.22 L1.13,10.20 L5.04,7.47 L6.09,2.83 L10.78,3.67Z" fill="url(#gl)" stroke="url(#gl)" stroke-width="1.6" stroke-linejoin="round"/><circle cx="13.6" cy="13.2" r="6.6" fill="#1a1410"/><path d="M16.2,12.6 A3.0,3.0 0 1 0 13.0,16.4 A3.0,3.0 0 0 0 16.5,13.5" fill="none" stroke="#e6b070" stroke-width="1.5" stroke-linecap="round"/></svg>
<svg style="position:absolute;left:15px;top:48px" width="24" height="24" viewBox="0 0 24 24"><path d="M3,8H21a1,1,0,0,0,0-2H3A1,1,0,0,0,3,8Zm18,8H3a1,1,0,0,0,0,2H21a1,1,0,0,0,0-2Zm0-5H3a1,1,0,0,0,0,2H21a1,1,0,0,0,0-2Z" fill="#ccccdc"/></svg>
<svg style="position:absolute;left:99px;top:53px" width="14" height="14" viewBox="0 0 24 24"><path d="M14.83,11.29,10.59,7.05a1,1,0,0,0-1.42,0,1,1,0,0,0,0,1.41L12.71,12,9.17,15.54a1,1,0,0,0,0,1.41,1,1,0,0,0,.71.3,1,1,0,0,0,.71-.3l4.24-4.24A1,1,0,0,0,14.83,11.29Z" fill="#8e8f99"/></svg>
<svg style="position:absolute;left:204px;top:53px" width="14" height="14" viewBox="0 0 24 24"><path d="M14.83,11.29,10.59,7.05a1,1,0,0,0-1.42,0,1,1,0,0,0,0,1.41L12.71,12,9.17,15.54a1,1,0,0,0,0,1.41,1,1,0,0,0,.71.3,1,1,0,0,0,.71-.3l4.24-4.24A1,1,0,0,0,14.83,11.29Z" fill="#8e8f99"/></svg>
<svg style="position:absolute;left:330px;top:53px" width="14" height="14" viewBox="0 0 24 24"><path d="M14.83,11.29,10.59,7.05a1,1,0,0,0-1.42,0,1,1,0,0,0,0,1.41L12.71,12,9.17,15.54a1,1,0,0,0,0,1.41,1,1,0,0,0,.71.3,1,1,0,0,0,.71-.3l4.24-4.24A1,1,0,0,0,14.83,11.29Z" fill="#8e8f99"/></svg>
<svg style="position:absolute;left:490px;top:51px" width="19" height="19" viewBox="0 0 24 24"><path d="M22,9.67A1,1,0,0,0,21.14,9l-5.69-.83L12.9,3a1,1,0,0,0-1.8,0L8.55,8.16,2.86,9a1,1,0,0,0-.81.68,1,1,0,0,0,.25,1l4.13,4-1,5.68A1,1,0,0,0,6.9,21.44L12,18.77l5.1,2.67a.93.93,0,0,0,.46.12,1,1,0,0,0,.59-.19,1,1,0,0,0,.4-1l-1-5.68,4.13-4A1,1,0,0,0,22,9.67Z" fill="#f58a2a"/></svg>
<svg style="position:absolute;left:1402px;top:51px" width="18" height="18" viewBox="0 0 24 24"><path d="M20.71,9.29l-6-6a1,1,0,0,0-.32-.21A1.09,1.09,0,0,0,14,3H6A3,3,0,0,0,3,6V18a3,3,0,0,0,3,3H18a3,3,0,0,0,3-3V10A1,1,0,0,0,20.71,9.29ZM9,5h4V7H9Zm6,14H9V16a1,1,0,0,1,1-1h4a1,1,0,0,1,1,1Zm4-1a1,1,0,0,1-1,1H17V16a3,3,0,0,0-3-3H10a3,3,0,0,0-3,3v3H6a1,1,0,0,1-1-1V6A1,1,0,0,1,6,5H7V8A1,1,0,0,0,8,9h6a1,1,0,0,0,1-1V6.41l4,4Z" fill="#9a9ba5"/></svg>
<svg style="position:absolute;left:1445px;top:50px" width="20" height="20" viewBox="0 0 24 24"><path d="M19.9,12.66a1,1,0,0,1,0-1.32L21.18,9.9a1,1,0,0,0,.12-1.17l-2-3.46a1,1,0,0,0-1.07-.48l-1.88.38a1,1,0,0,1-1.15-.66l-.61-1.83A1,1,0,0,0,13.64,2h-4a1,1,0,0,0-1,.68L8.08,4.51a1,1,0,0,1-1.15.66L5,4.79A1,1,0,0,0,4,5.27L2,8.73A1,1,0,0,0,2.1,9.9l1.27,1.44a1,1,0,0,1,0,1.32L2.1,14.1A1,1,0,0,0,2,15.27l2,3.46a1,1,0,0,0,1.07.48l1.88-.38a1,1,0,0,1,1.15.66l.61,1.83a1,1,0,0,0,1,.68h4a1,1,0,0,0,.95-.68l.61-1.83a1,1,0,0,1,1.15-.66l1.88.38a1,1,0,0,0,1.07-.48l2-3.46a1,1,0,0,0-.12-1.17ZM18.41,14l.8.9-1.28,2.22-1.18-.24a3,3,0,0,0-3.45,2L12.92,20H10.36L10,18.86a3,3,0,0,0-3.45-2l-1.18.24L4.07,14.89l.8-.9a3,3,0,0,0,0-4l-.8-.9L5.35,6.89l1.18.24a3,3,0,0,0,3.45-2L10.36,4h2.56l.38,1.14a3,3,0,0,0,3.45,2l1.18-.24,1.28,2.22-.8.9A3,3,0,0,0,18.41,14ZM11.64,8a4,4,0,1,0,4,4A4,4,0,0,0,11.64,8Zm0,6a2,2,0,1,1,2-2A2,2,0,0,1,11.64,14Z" fill="#9a9ba5"/></svg>
<svg style="position:absolute;left:1515px;top:53px" width="14" height="14" viewBox="0 0 24 24"><path d="M17,9.17a1,1,0,0,0-1.41,0L12,12.71,8.46,9.17a1,1,0,0,0-1.41,0,1,1,0,0,0,0,1.42l4.24,4.24a1,1,0,0,0,1.42,0L17,10.59A1,1,0,0,0,17,9.17Z" fill="#ccccdc"/></svg>
<svg style="position:absolute;left:1622.5px;top:51px" width="18.5" height="18.5" viewBox="0 0 24 24"><path d="M12,2A10,10,0,1,0,22,12,10,10,0,0,0,12,2Zm0,18a8,8,0,1,1,8-8A8,8,0,0,1,12,20Zm-1-9H8a1,1,0,0,0,0,2h4a1,1,0,0,0,1-1V7a1,1,0,0,0-2,0Z" fill="#9a9ba5"/></svg>
<svg style="position:absolute;left:1699.5px;top:51.5px" width="17" height="17" viewBox="0 0 24 24"><path d="M17,9.17a1,1,0,0,0-1.41,0L12,12.71,8.46,9.17a1,1,0,0,0-1.41,0,1,1,0,0,0,0,1.42l4.24,4.24a1,1,0,0,0,1.42,0L17,10.59A1,1,0,0,0,17,9.17Z" fill="#9a9ba5"/></svg>
<svg style="position:absolute;left:1732.5px;top:51.5px" width="18.5" height="18.5" viewBox="0 0 24 24"><path d="M21.71,20.29,18,16.61A9,9,0,1,0,16.61,18l3.68,3.68a1,1,0,0,0,1.42,0A1,1,0,0,0,21.71,20.29ZM11,18a7,7,0,1,1,7-7A7,7,0,0,1,11,18Zm4-8H7a1,1,0,0,0,0,2h8a1,1,0,0,0,0-2Z" fill="#9a9ba5"/></svg>
<svg style="position:absolute;left:1775px;top:50px" width="20" height="20" viewBox="0 0 24 24"><path d="M19.91,15.51H15.38a1,1,0,0,0,0,2h2.4A8,8,0,0,1,4,12a1,1,0,0,0-2,0,10,10,0,0,0,16.88,7.23V21a1,1,0,0,0,2,0V16.5A1,1,0,0,0,19.91,15.51ZM12,2A10,10,0,0,0,5.12,4.77V3a1,1,0,0,0-2,0V7.5a1,1,0,0,0,1,1h4.5a1,1,0,0,0,0-2H6.22A8,8,0,0,1,20,12a1,1,0,0,0,2,0A10,10,0,0,0,12,2Z" fill="#9a9ba5"/></svg>
<svg style="position:absolute;left:1834.5px;top:51.5px" width="17" height="17" viewBox="0 0 24 24"><path d="M17,9.17a1,1,0,0,0-1.41,0L12,12.71,8.46,9.17a1,1,0,0,0-1.41,0,1,1,0,0,0,0,1.42l4.24,4.24a1,1,0,0,0,1.42,0L17,10.59A1,1,0,0,0,17,9.17Z" fill="#9a9ba5"/></svg>
<svg style="position:absolute;left:1882px;top:49px" width="24" height="24" viewBox="0 0 24 24"><path d="M17,13.41,12.71,9.17a1,1,0,0,0-1.42,0L7.05,13.41a1,1,0,0,0,0,1.42,1,1,0,0,0,1.41,0L12,11.29l3.54,3.54a1,1,0,0,0,.7.29,1,1,0,0,0,.71-.29A1,1,0,0,0,17,13.41Z" fill="#b8b9c2"/></svg>
<svg style="position:absolute;left:46px;top:95px" width="18" height="18" viewBox="0 0 24 24"><path d="M20,8h0L14,2.74a3,3,0,0,0-4,0L4,8a3,3,0,0,0-1,2.26V19a3,3,0,0,0,3,3H18a3,3,0,0,0,3-3V10.25A3,3,0,0,0,20,8ZM14,20H10V15a1,1,0,0,1,1-1h2a1,1,0,0,1,1,1Zm5-1a1,1,0,0,1-1,1H16V15a3,3,0,0,0-3-3H11a3,3,0,0,0-3,3v5H6a1,1,0,0,1-1-1V10.25a1,1,0,0,1,.34-.75l6-5.25a1,1,0,0,1,1.32,0l6,5.25a1,1,0,0,1,.34.75Z" fill="#9a9ba5"/></svg>
<svg style="position:absolute;left:46px;top:127px" width="18" height="18" viewBox="0 0 24 24"><path d="M22,9.67A1,1,0,0,0,21.14,9l-5.69-.83L12.9,3a1,1,0,0,0-1.8,0L8.55,8.16,2.86,9a1,1,0,0,0-.81.68,1,1,0,0,0,.25,1l4.13,4-1,5.68A1,1,0,0,0,6.9,21.44L12,18.77l5.1,2.67a.93.93,0,0,0,.46.12,1,1,0,0,0,.59-.19,1,1,0,0,0,.4-1l-1-5.68,4.13-4A1,1,0,0,0,22,9.67Zm-6.15,4a1,1,0,0,0-.29.88l.72,4.2-3.76-2a1.06,1.06,0,0,0-.94,0l-3.76,2,.72-4.2a1,1,0,0,0-.29-.88l-3-3,4.21-.61a1,1,0,0,0,.76-.55L12,5.7l1.88,3.82a1,1,0,0,0,.76.55l4.21.61Z" fill="#ccccdc"/></svg>
<svg style="position:absolute;left:46px;top:191px" width="18" height="18" viewBox="0 0 24 24"><path d="M10,13H3a1,1,0,0,0-1,1v7a1,1,0,0,0,1,1h7a1,1,0,0,0,1-1V14A1,1,0,0,0,10,13ZM9,20H4V15H9ZM21,2H14a1,1,0,0,0-1,1v7a1,1,0,0,0,1,1h7a1,1,0,0,0,1-1V3A1,1,0,0,0,21,2ZM20,9H15V4h5Zm1,4H14a1,1,0,0,0-1,1v7a1,1,0,0,0,1,1h7a1,1,0,0,0,1-1V14A1,1,0,0,0,21,13Zm-1,7H15V15h5ZM10,2H3A1,1,0,0,0,2,3v7a1,1,0,0,0,1,1h7a1,1,0,0,0,1-1V3A1,1,0,0,0,10,2ZM9,9H4V4H9Z" fill="#9a9ba5"/></svg>
<svg style="position:absolute;left:46px;top:223px" width="18" height="18" viewBox="0 0 24 24"><path d="M12,2A10,10,0,1,0,22,12,10,10,0,0,0,12,2Zm0,18a8,8,0,1,1,8-8A8,8,0,0,1,12,20ZM15.5,7.1,9.6,9.2a.7.7,0,0,0-.4.4L7.1,15.5a.9.9,0,0,0,1.2,1.2l5.9-2.1a.7.7,0,0,0,.4-.4l2.1-5.9A.9.9,0,0,0,15.5,7.1Zm-2.8,5.6-3.2,1.1,1.1-3.2,3.2-1.1Z" fill="#9a9ba5"/></svg>
<svg style="position:absolute;left:46px;top:255px" width="18" height="18" viewBox="0 0 24 24"><path d="M18,13.18V10a6,6,0,0,0-5-5.91V3a1,1,0,0,0-2,0V4.09A6,6,0,0,0,6,10v3.18A3,3,0,0,0,4,16v2a1,1,0,0,0,1,1H8.14a4,4,0,0,0,7.72,0H19a1,1,0,0,0,1-1V16A3,3,0,0,0,18,13.18ZM8,10a4,4,0,0,1,8,0v3H8Zm4,10a2,2,0,0,1-1.72-1h3.44A2,2,0,0,1,12,20Zm6-3H6V16a1,1,0,0,1,1-1H17a1,1,0,0,1,1,1Z" fill="#9a9ba5"/></svg>
<svg style="position:absolute;left:46px;top:287px" width="18" height="18" viewBox="0 0 18 18"><circle cx="7.2" cy="7.2" r="5.6" fill="none" stroke="#9a9ba5" stroke-width="1.5"/><circle cx="10.8" cy="10.8" r="5.6" fill="none" stroke="#9a9ba5" stroke-width="1.5"/><path d="M6.5,11.5 L11.5,6.5" stroke="#9a9ba5" stroke-width="1.5"/></svg>
<svg style="position:absolute;left:46px;top:319px" width="18" height="18" viewBox="0 0 24 24"><path d="M19.9,12.66a1,1,0,0,1,0-1.32L21.18,9.9a1,1,0,0,0,.12-1.17l-2-3.46a1,1,0,0,0-1.07-.48l-1.88.38a1,1,0,0,1-1.15-.66l-.61-1.83A1,1,0,0,0,13.64,2h-4a1,1,0,0,0-1,.68L8.08,4.51a1,1,0,0,1-1.15.66L5,4.79A1,1,0,0,0,4,5.27L2,8.73A1,1,0,0,0,2.1,9.9l1.27,1.44a1,1,0,0,1,0,1.32L2.1,14.1A1,1,0,0,0,2,15.27l2,3.46a1,1,0,0,0,1.07.48l1.88-.38a1,1,0,0,1,1.15.66l.61,1.83a1,1,0,0,0,1,.68h4a1,1,0,0,0,.95-.68l.61-1.83a1,1,0,0,1,1.15-.66l1.88.38a1,1,0,0,0,1.07-.48l2-3.46a1,1,0,0,0-.12-1.17ZM18.41,14l.8.9-1.28,2.22-1.18-.24a3,3,0,0,0-3.45,2L12.92,20H10.36L10,18.86a3,3,0,0,0-3.45-2l-1.18.24L4.07,14.89l.8-.9a3,3,0,0,0,0-4l-.8-.9L5.35,6.89l1.18.24a3,3,0,0,0,3.45-2L10.36,4h2.56l.38,1.14a3,3,0,0,0,3.45,2l1.18-.24,1.28,2.22-.8.9A3,3,0,0,0,18.41,14ZM11.64,8a4,4,0,1,0,4,4A4,4,0,0,0,11.64,8Zm0,6a2,2,0,1,1,2-2A2,2,0,0,1,11.64,14Z" fill="#9a9ba5"/></svg>
<svg style="position:absolute;left:271px;top:96px" width="16" height="16" viewBox="0 0 16 16"><rect x="1.2" y="1.2" width="13.6" height="13.6" rx="1.5" fill="none" stroke="#9a9ba5" stroke-width="1.6"/><rect x="4.5" y="1.5" width="1.6" height="13" fill="#9a9ba5"/></svg>
<svg style="position:absolute;left:12px;top:128px" width="16" height="16" viewBox="0 0 24 24"><path d="M17,9.17a1,1,0,0,0-1.41,0L12,12.71,8.46,9.17a1,1,0,0,0-1.41,0,1,1,0,0,0,0,1.42l4.24,4.24a1,1,0,0,0,1.42,0L17,10.59A1,1,0,0,0,17,9.17Z" fill="#ccccdc"/></svg>
<svg style="position:absolute;left:12px;top:192px" width="16" height="16" viewBox="0 0 24 24"><path d="M14.83,11.29,10.59,7.05a1,1,0,0,0-1.42,0,1,1,0,0,0,0,1.41L12.71,12,9.17,15.54a1,1,0,0,0,0,1.41,1,1,0,0,0,.71.3,1,1,0,0,0,.71-.3l4.24-4.24A1,1,0,0,0,14.83,11.29Z" fill="#ccccdc"/></svg>
<svg style="position:absolute;left:12px;top:256px" width="16" height="16" viewBox="0 0 24 24"><path d="M14.83,11.29,10.59,7.05a1,1,0,0,0-1.42,0,1,1,0,0,0,0,1.41L12.71,12,9.17,15.54a1,1,0,0,0,0,1.41,1,1,0,0,0,.71.3,1,1,0,0,0,.71-.3l4.24-4.24A1,1,0,0,0,14.83,11.29Z" fill="#ccccdc"/></svg>
<svg style="position:absolute;left:12px;top:288px" width="16" height="16" viewBox="0 0 24 24"><path d="M14.83,11.29,10.59,7.05a1,1,0,0,0-1.42,0,1,1,0,0,0,0,1.41L12.71,12,9.17,15.54a1,1,0,0,0,0,1.41,1,1,0,0,0,.71.3,1,1,0,0,0,.71-.3l4.24-4.24A1,1,0,0,0,14.83,11.29Z" fill="#ccccdc"/></svg>
<svg style="position:absolute;left:12px;top:320px" width="16" height="16" viewBox="0 0 24 24"><path d="M17,9.17a1,1,0,0,0-1.41,0L12,12.71,8.46,9.17a1,1,0,0,0-1.41,0,1,1,0,0,0,0,1.42l4.24,4.24a1,1,0,0,0,1.42,0L17,10.59A1,1,0,0,0,17,9.17Z" fill="#ccccdc"/></svg>
<svg style="position:absolute;left:47px;top:352px" width="16" height="16" viewBox="0 0 24 24"><path d="M17,9.17a1,1,0,0,0-1.41,0L12,12.71,8.46,9.17a1,1,0,0,0-1.41,0,1,1,0,0,0,0,1.42l4.24,4.24a1,1,0,0,0,1.42,0L17,10.59A1,1,0,0,0,17,9.17Z" fill="#ccccdc"/></svg>
<svg style="position:absolute;left:47px;top:512px" width="16" height="16" viewBox="0 0 24 24"><path d="M14.83,11.29,10.59,7.05a1,1,0,0,0-1.42,0,1,1,0,0,0,0,1.41L12.71,12,9.17,15.54a1,1,0,0,0,0,1.41,1,1,0,0,0,.71.3,1,1,0,0,0,.71-.3l4.24-4.24A1,1,0,0,0,14.83,11.29Z" fill="#ccccdc"/></svg>
<svg style="position:absolute;left:47px;top:544px" width="16" height="16" viewBox="0 0 24 24"><path d="M14.83,11.29,10.59,7.05a1,1,0,0,0-1.42,0,1,1,0,0,0,0,1.41L12.71,12,9.17,15.54a1,1,0,0,0,0,1.41,1,1,0,0,0,.71.3,1,1,0,0,0,.71-.3l4.24-4.24A1,1,0,0,0,14.83,11.29Z" fill="#ccccdc"/></svg>
<svg style="position:absolute;left:1162px;top:698px" width="15" height="15" viewBox="0 0 24 24"><path d="M12,2A10,10,0,1,0,22,12,10,10,0,0,0,12,2Zm0,18a8,8,0,1,1,8-8A8,8,0,0,1,12,20Zm-1-9H8a1,1,0,0,0,0,2h4a1,1,0,0,0,1-1V7a1,1,0,0,0-2,0Z" fill="#6e9fff"/></svg>
<svg style="position:absolute;left:807px;top:728px" width="14" height="14" viewBox="0 0 24 24"><path d="M17,13.41,12.71,9.17a1,1,0,0,0-1.42,0L7.05,13.41a1,1,0,0,0,0,1.42,1,1,0,0,0,1.41,0L12,11.29l3.54,3.54a1,1,0,0,0,.7.29,1,1,0,0,0,.71-.29A1,1,0,0,0,17,13.41Z" fill="#3a9de6"/></svg>
</body></html>
